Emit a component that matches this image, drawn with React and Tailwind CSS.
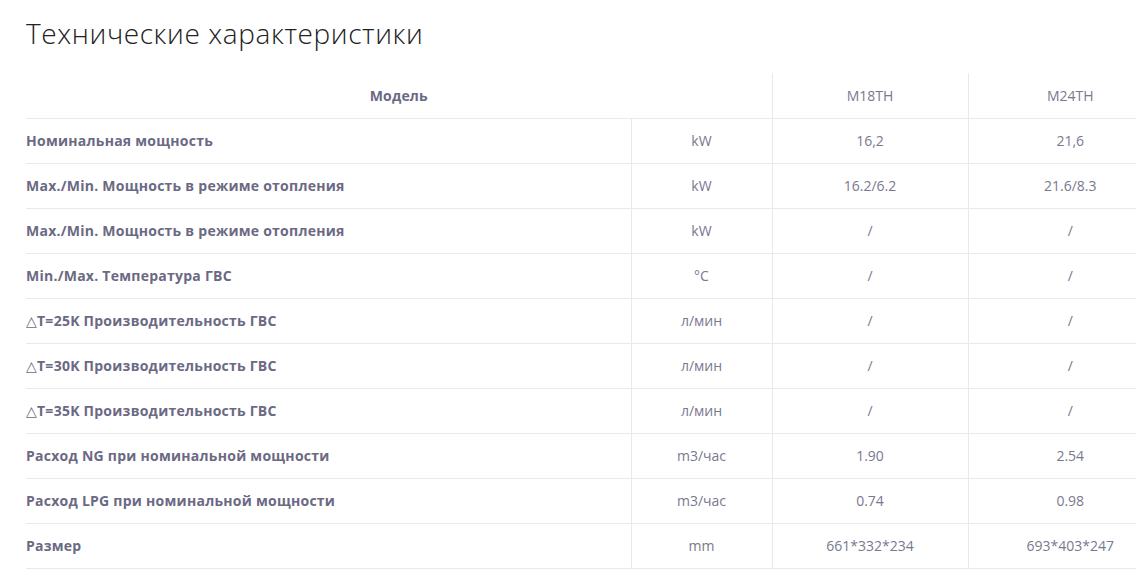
import React from "react";

const rows = [
  ["Номинальная мощность", "kW", "16,2", "21,6"],
  ["Max./Min. Мощность в режиме отопления", "kW", "16.2/6.2", "21.6/8.3"],
  ["Max./Min. Мощность в режиме отопления", "kW", "/", "/"],
  ["Min./Max. Температура ГВС", "°C", "/", "/"],
  ["△T=25K Производительность ГВС", "л/мин", "/", "/"],
  ["△T=30K Производительность ГВС", "л/мин", "/", "/"],
  ["△T=35K Производительность ГВС", "л/мин", "/", "/"],
  ["Расход NG при номинальной мощности", "m3/час", "1.90", "2.54"],
  ["Расход LPG при номинальной мощности", "m3/час", "0.74", "0.98"],
  ["Размер", "mm", "661*332*234", "693*403*247"],
];

export default function App() {
  return (
    <div
      className="w-[1136px] h-[574px] overflow-hidden bg-white"
      style={{ fontFamily: '"Open Sans", "DejaVu Sans", sans-serif' }}
    >
      <div className="pl-[26px] pt-[15px]">
        <h1 className="text-[28px] font-light text-[#222222] leading-[36px] tracking-[0.6px]">
          Технические характеристики
        </h1>
        <table className="mt-[22px] w-[1146px] border-collapse table-fixed">
          <colgroup>
            <col className="w-[605px]" />
            <col className="w-[141px]" />
            <col className="w-[196px]" />
            <col className="w-[204px]" />
          </colgroup>
          <thead>
            <tr className="h-[45px] border-b border-[#e8e8ee]">
              <th colSpan={2} className="text-center text-[14px] font-bold text-[#6b6983] tracking-[0.2px]">
                Модель
              </th>
              <th className="border-l border-[#e8e8ee] text-center text-[14px] font-normal text-[#7a7890]">
                M18TH
              </th>
              <th className="border-l border-[#e8e8ee] text-center text-[14px] font-normal text-[#7a7890]">
                M24TH
              </th>
            </tr>
          </thead>
          <tbody>
            {rows.map((r, i) => (
              <tr key={i} className="h-[45px] border-b border-[#e8e8ee]">
                <td className="text-left text-[14px] font-bold text-[#6b6983] whitespace-nowrap tracking-[0.25px]">
                  {r[0]}
                </td>
                <td className="border-l border-[#e8e8ee] text-center text-[14px] text-[#7a7890]">
                  {r[1]}
                </td>
                <td className="border-l border-[#e8e8ee] text-center text-[14px] text-[#7a7890]">
                  {r[2]}
                </td>
                <td className="border-l border-[#e8e8ee] text-center text-[14px] text-[#7a7890]">
                  {r[3]}
                </td>
              </tr>
            ))}
          </tbody>
        </table>
      </div>
    </div>
  );
}
